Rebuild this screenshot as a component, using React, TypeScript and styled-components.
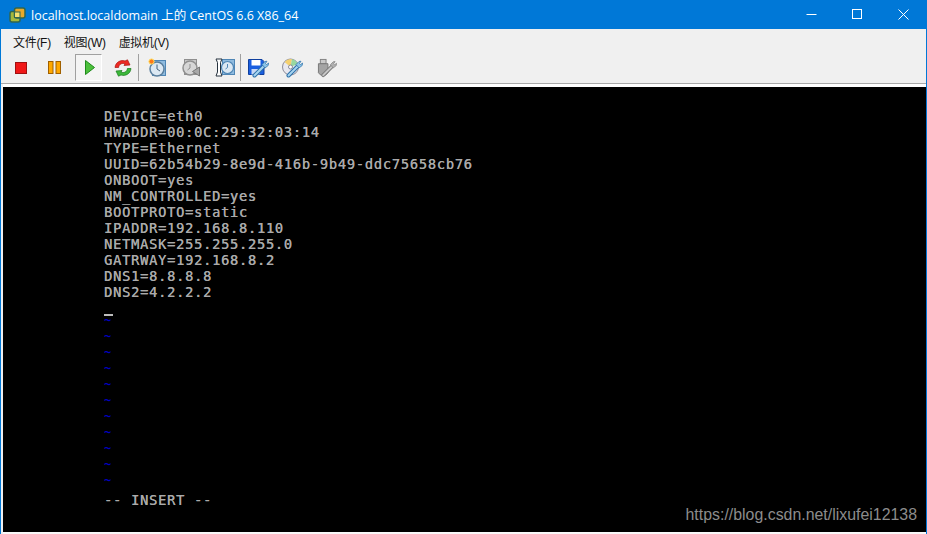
import React from 'react';
import styled, { createGlobalStyle } from 'styled-components';

const GlobalStyle = createGlobalStyle`
  html, body {
    margin: 0;
    padding: 0;
    background: #f0f0f0;
    overflow: hidden;
  }
`;

const configLines = [
  'DEVICE=eth0',
  'HWADDR=00:0C:29:32:03:14',
  'TYPE=Ethernet',
  'UUID=62b54b29-8e9d-416b-9b49-ddc75658cb76',
  'ONBOOT=yes',
  'NM_CONTROLLED=yes',
  'BOOTPROTO=static',
  'IPADDR=192.168.8.110',
  'NETMASK=255.255.255.0',
  'GATRWAY=192.168.8.2',
  'DNS1=8.8.8.8',
  'DNS2=4.2.2.2',
];

const StopIcon = () => (
  <svg width="12" height="12" viewBox="0 0 12 12">
    <rect x="0.5" y="0.5" width="11" height="11" fill="#f01818" stroke="#a01010" />
  </svg>
);

const PauseIcon = () => (
  <svg width="13" height="13" viewBox="0 0 13 13">
    <rect x="0.5" y="0.5" width="4.5" height="12" fill="#ffa800" stroke="#a06000" />
    <rect x="8" y="0.5" width="4.5" height="12" fill="#ffa800" stroke="#a06000" />
  </svg>
);

const PlayIcon = () => (
  <svg width="10" height="15" viewBox="0 0 10 15">
    <path d="M0.5 0.5 L9.5 7.5 L0.5 14.5 Z" fill="#4cc03c" stroke="#1f8a1c" />
  </svg>
);

const RefreshIcon = () => (
  <svg width="18" height="18" viewBox="0 0 18 18">
    <path d="M1 8.5 C1.5 3 7 0.5 11 2 L13.5 0.8 L16 6 L10 6.5 L11 4.8 C8 3.8 5 5 4.6 8.5 Z" fill="#ee2a24" stroke="#a81812" strokeWidth="0.7" />
    <path d="M17 9.5 C16.5 15 11 17.5 7 16 L4.5 17.2 L2 12 L8 11.5 L7 13.2 C10 14.2 13 13 13.4 9.5 Z" fill="#3cb83a" stroke="#17781a" strokeWidth="0.7" />
  </svg>
);

const ClockIcon = () => (
  <svg width="18" height="19" viewBox="0 0 18 19">
    <rect x="4.5" y="2.5" width="13" height="15" fill="#8fbbdf" stroke="#4f86b5" />
    <circle cx="9" cy="11" r="7" fill="#dbe8f3" stroke="#5a7f9e" strokeWidth="1.5" />
    <path d="M9 6.5 V11 L12 13" fill="none" stroke="#46637c" />
    <circle cx="3.5" cy="3.5" r="2.6" fill="#ff7a1a" stroke="#ffe060" />
  </svg>
);

const RevertIcon = () => (
  <svg width="18" height="19" viewBox="0 0 18 19">
    <rect x="2.5" y="1.5" width="12" height="15" fill="#c8c8c8" stroke="#8f8f8f" />
    <circle cx="8" cy="10" r="7" fill="#d6d6d6" stroke="#8f8f8f" strokeWidth="1.5" />
    <path d="M8 6 V10 L5.5 12" fill="none" stroke="#8f8f8f" />
    <path d="M17.5 9 V18 L10.5 13.5 Z" fill="#a8a8a8" stroke="#777" />
  </svg>
);

const ManagerIcon = () => (
  <svg width="20" height="19" viewBox="0 0 20 19">
    <rect x="7.5" y="1.5" width="12" height="15" fill="#8fbbdf" stroke="#4f86b5" />
    <circle cx="12.5" cy="9.5" r="6" fill="#dbe8f3" stroke="#4f86b5" strokeWidth="1.2" />
    <path d="M12.5 6 V9.5 L10.5 11" fill="none" stroke="#4f86b5" />
    <path d="M1 1 H7 L5.5 4.5 V14 L7 18 H1 L2.5 14 V4.5 Z" fill="#ffffff" stroke="#26323e" />
  </svg>
);

const WrenchOverlay = ({ muted }: { muted?: boolean }) => (
  <g>
    <path d="M6.5 17.5 L15.5 8.5" stroke={muted ? '#7d7d7d' : '#2a6ea8'} strokeWidth="4" strokeLinecap="round" />
    <path d="M6.5 17.5 L15.5 8.5" stroke={muted ? '#c8c8c8' : '#a6d4f0'} strokeWidth="2" strokeLinecap="round" />
    <path d="M14 6.5 L17 3.5 L19 3.2 L17.5 5.5 L18.5 6.5 L20.6 5 L20.2 7.5 L17 10 Z" fill={muted ? '#b0b0b0' : '#8cc4e8'} stroke={muted ? '#7d7d7d' : '#2a6ea8'} strokeWidth="0.7" />
  </g>
);

const DiskIcon = () => (
  <svg width="21" height="20" viewBox="0 0 21 20">
    <path d="M0.5 1.5 H14 L16 3.5 V16.5 H0.5 Z" fill="#1a5fe0" stroke="#0f3f9e" />
    <rect x="3.5" y="2" width="9" height="5.5" fill="#ffffff" />
    <rect x="3.5" y="11" width="8" height="5.5" fill="#c8d8f4" />
    <WrenchOverlay />
  </svg>
);

const CdIcon = () => (
  <svg width="21" height="20" viewBox="0 0 21 20">
    <circle cx="8.5" cy="9" r="8" fill="#e8e8f0" stroke="#8a8a98" />
    <path d="M8.5 9 L2.6 4 A8 8 0 0 1 10 1.2 Z" fill="#f4d070" />
    <path d="M8.5 9 L10 1.2 A8 8 0 0 1 15.8 6 Z" fill="#98d8a0" />
    <circle cx="8.5" cy="9" r="2" fill="#ffffff" stroke="#8a8a98" />
    <WrenchOverlay />
  </svg>
);

const UsbIcon = () => (
  <svg width="20" height="20" viewBox="0 0 21 20">
    <rect x="3.5" y="1" width="6" height="4.5" fill="#c8c8c8" stroke="#808080" />
    <path d="M1.5 5.5 H11.5 V15 L9 17.5 H4 L1.5 15 Z" fill="#a4a4a4" stroke="#767676" />
    <WrenchOverlay muted />
  </svg>
);

const LogoIcon = () => (
  <svg width="17" height="16" viewBox="0 0 17 16">
    <rect x="1" y="4.5" width="10" height="10.5" rx="2" fill="#a4b83c" stroke="#2f6650" strokeWidth="1.5" />
    <rect x="5.5" y="1" width="10.5" height="10" rx="2" fill="#e8a92a" stroke="#2f6650" strokeWidth="1.5" />
    <rect x="5.5" y="5" width="5.5" height="5.5" fill="#f4e070" stroke="#2f6650" />
  </svg>
);

export default function App() {
  return (
    <>
      <GlobalStyle />
      <Window>
        <TitleBar>
          <TitleGroup>
            <LogoIcon />
            <TitleText>localhost.localdomain 上的 CentOS 6.6 X86_64</TitleText>
          </TitleGroup>
          <WindowControls>
            <ControlButton>
              <svg width="11" height="11" viewBox="0 0 11 11">
                <path d="M0.5 5.5 H10.5" stroke="#fff" />
              </svg>
            </ControlButton>
            <ControlButton>
              <svg width="11" height="11" viewBox="0 0 11 11">
                <rect x="0.5" y="0.5" width="9" height="9" fill="none" stroke="#fff" />
              </svg>
            </ControlButton>
            <ControlButton>
              <svg width="11" height="11" viewBox="0 0 11 11">
                <path d="M0.5 0.5 L10.5 10.5 M10.5 0.5 L0.5 10.5" stroke="#fff" />
              </svg>
            </ControlButton>
          </WindowControls>
        </TitleBar>
        <MenuBar>
          <MenuItem>文件(F)</MenuItem>
          <MenuItem>视图(W)</MenuItem>
          <MenuItem>虚拟机(V)</MenuItem>
        </MenuBar>
        <Toolbar>
          <ToolButton><StopIcon /></ToolButton>
          <ToolButton><PauseIcon /></ToolButton>
          <ToolButton $active><PlayIcon /></ToolButton>
          <ToolButton><RefreshIcon /></ToolButton>
          <ToolSeparator />
          <ToolButton><ClockIcon /></ToolButton>
          <ToolButton><RevertIcon /></ToolButton>
          <ToolButton><ManagerIcon /></ToolButton>
          <ToolSeparator />
          <ToolButton><DiskIcon /></ToolButton>
          <ToolButton><CdIcon /></ToolButton>
          <ToolButton><UsbIcon /></ToolButton>
        </Toolbar>
        <Console>
          {configLines.map((line) => (
            <ConsoleLine key={line}>{line}</ConsoleLine>
          ))}
          <ConsoleLine><Cursor /></ConsoleLine>
          {Array.from({ length: 11 }, (_, i) => (
            <ConsoleLine key={i}><Tilde>~</Tilde></ConsoleLine>
          ))}
          <ConsoleLine>-- INSERT --</ConsoleLine>
          <Watermark>https://blog.csdn.net/lixufei12138</Watermark>
        </Console>
      </Window>
    </>
  );
}

const Window = styled.div`
  width: 927px;
  height: 534px;
  box-sizing: border-box;
  display: flex;
  flex-direction: column;
  background: #f0f0f0;
  border-left: 1px solid #0078d7;
  border-right: 1px solid #0078d7;
`;

const TitleBar = styled.div`
  height: 29px;
  flex: none;
  margin-left: -1px;
  margin-right: -1px;
  background: #0078d7;
  display: flex;
  align-items: center;
  justify-content: space-between;
`;

const TitleGroup = styled.div`
  display: flex;
  align-items: center;
  gap: 5px;
  padding-left: 9px;
`;

const TitleText = styled.span`
  font-family: "Open Sans", "Noto Sans CJK SC", sans-serif;
  font-size: 12.5px;
  color: #fff;
  white-space: nowrap;
`;

const WindowControls = styled.div`
  display: flex;
  padding-right: 1px;
`;

const ControlButton = styled.div`
  width: 46px;
  height: 29px;
  display: flex;
  align-items: center;
  justify-content: center;
`;

const MenuBar = styled.div`
  height: 25px;
  flex: none;
  display: flex;
  align-items: center;
  gap: 13px;
  padding-left: 12px;
`;

const MenuItem = styled.span`
  font-family: "Liberation Sans", "Noto Sans CJK SC", sans-serif;
  font-size: 12px;
  letter-spacing: -0.3px;
  color: #111;
  white-space: nowrap;
`;

const Toolbar = styled.div`
  height: 30px;
  flex: none;
  box-sizing: border-box;
  display: flex;
  align-items: center;
  padding: 0 0 2px 2.5px;
  border-bottom: 1px solid #a9a9a9;
`;

const ToolButton = styled.div<{ $active?: boolean }>`
  width: 34px;
  height: 27px;
  flex: none;
  box-sizing: border-box;
  display: flex;
  align-items: center;
  justify-content: center;
  ${(p) =>
    p.$active &&
    `
    width: 27px;
    margin: 0 4px 0 3px;
    padding-left: 3px;
    background: #f4f4f4;
    border: 1px solid;
    border-color: #a0a0a0 #fff #fff #a0a0a0;
  `}
`;

const ToolSeparator = styled.div`
  width: 1px;
  height: 27px;
  flex: none;
  margin: 0 0.5px 0 -1.5px;
  background: #a0a0a0;
`;

const Console = styled.div`
  position: relative;
  flex: 1;
  margin-left: 2px;
  padding: 21px 0 0 101px;
  background: #000;
  border-top: 3px solid #fff;
  border-bottom: 2px solid #f8f8f8;
  overflow: hidden;
`;

const ConsoleLine = styled.div`
  height: 16px;
  line-height: 16px;
  font-family: "DejaVu Sans Mono", "Liberation Mono", monospace;
  font-size: 13.7px;
  letter-spacing: 0.75px;
  color: #aaa;
  text-shadow: 0.3px 0 #aaa;
  white-space: pre;
`;

const Cursor = styled.span`
  display: inline-block;
  width: 9px;
  height: 2px;
  margin-top: 14px;
  vertical-align: top;
  background: #bbb;
`;

const Tilde = styled.span`
  display: block;
  height: 16px;
  font-size: 12px;
  font-weight: bold;
  line-height: 8px;
  color: #0000c0;
  text-shadow: none;
`;

const Watermark = styled.div`
  position: absolute;
  right: 9px;
  bottom: 8px;
  font-family: "Liberation Sans", sans-serif;
  font-size: 15.9px;
  letter-spacing: 0;
  color: #8c8c8c;
  text-shadow: none;
  white-space: nowrap;
`;
